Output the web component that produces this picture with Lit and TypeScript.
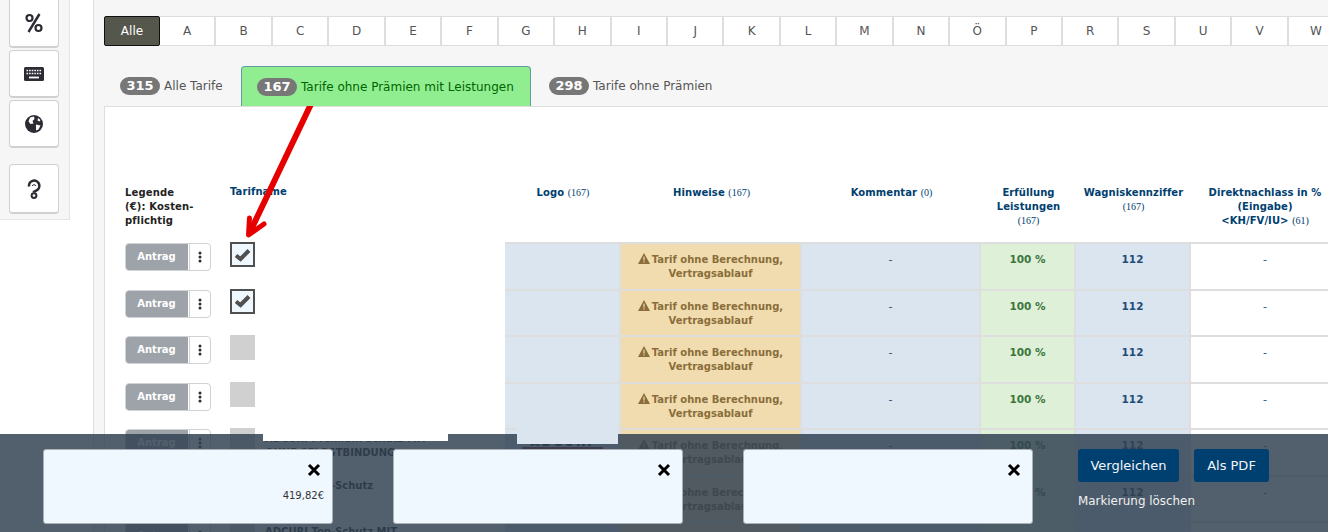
import { LitElement, html, css, svg } from "lit";
import { customElement } from "lit/decorators.js";

const LETTERS = "A B C D E F G H I J K L M N Ö P R S U V W".split(" ");
const NAMES: [string, string][] = [
  ["", ""], ["", ""], ["", ""], ["", ""],
  ["ADCURI Premium Schutz MIT", "OHNE SELBSTBINDUNG"],
  ["ADCURI Top-Schutz", ""],
  ["ADCURI Top-Schutz MIT", "SELBSTBINDUNG"],
];

const closeIcon = svg`<svg class="x" viewBox="0 0 14 14"><path d="M2 2 L12 12 M12 2 L2 12" stroke="#000" stroke-width="3" fill="none"/></svg>`;
const warn = svg`<svg class="warn" viewBox="0 0 12 11"><path d="M6 0 L12 11 H0 Z" fill="#8a6d3b"/><rect x="5.4" y="3.6" width="1.2" height="4" fill="#f0dcae"/><rect x="5.4" y="8.4" width="1.2" height="1.2" fill="#f0dcae"/></svg>`;
const dots = svg`<svg class="dots" viewBox="0 0 4 12"><circle cx="2" cy="2" r="1.5" fill="#2b2b33"/><circle cx="2" cy="6" r="1.5" fill="#2b2b33"/><circle cx="2" cy="10" r="1.5" fill="#2b2b33"/></svg>`;

@customElement("app-root")
export class AppRoot extends LitElement {
  static styles = css`
    :host { display: block; width: 1331px; height: 532px; overflow: hidden; position: relative; background: #fff; font-family: "DejaVu Sans", Verdana, sans-serif; color: #333; }
    .page { display: flex; height: 532px; width: 1328px; overflow: hidden; }
    .side { width: 70px; height: 220px; flex: none; box-sizing: border-box; background: #f6f6f6; border-right: 1px solid #e6e6e6; border-bottom: 1px solid #e6e6e6; padding-left: 9px; display: flex; flex-direction: column; gap: 2px; }
    .sb { width: 50px; height: 48px; box-sizing: border-box; background: #fff; border: 1px solid #d0d0d0; border-bottom-width: 2px; border-radius: 4px; display: flex; align-items: center; justify-content: center; flex: none; }
    .sb.first { border-top: none; border-top-left-radius: 0; border-top-right-radius: 0; }
    .sb.help { margin-top: 14px; height: 50px; }
    .sb svg { width: 22px; height: 22px; }
    .gutter { width: 23px; flex: none; }
    .main { flex: 1; min-width: 0; background: #f6f6f6; border-left: 1px solid #dde0e3; padding: 16px 0 0 10px; box-sizing: border-box; }
    .alpha { display: flex; height: 30px; }
    .alpha div { width: 56.45px; box-sizing: border-box; flex: none; background: #fff; border: 1px solid #dedede; border-left-width: 0; border-right-width: 2px; display: flex; align-items: center; justify-content: center; font-size: 12px; color: #555; }
    .alpha .on { background: #55564c; color: #fff; border: 1px solid #111; border-radius: 2px; width: 56px; }
    .tabs { display: flex; align-items: stretch; height: 40px; margin-top: 20px; position: relative; z-index: 1; }
    .tab { display: flex; align-items: center; gap: 4px; font-size: 12px; color: #555; height: 40px; box-sizing: border-box; }
    .tab.t1 { padding-left: 16px; width: 137px; }
    .tab.t2 { width: 290px; padding-left: 15px; background: #90ee90; color: #006400; border: 1px solid #5f9ea0; border-bottom: none; border-radius: 4px 4px 0 0; }
    .tab.t3 { padding-left: 18px; }
    .badge { background: #777; color: #fff; font-weight: 700; font-size: 13px; line-height: 18px; height: 18px; width: 40px; text-align: center; border-radius: 9px; flex: none; }
    .panel { background: #fff; border-top: 1px solid #dedede; border-left: 1px solid #dedede; height: 430px; box-sizing: border-box; overflow: hidden; }
    .row { display: grid; grid-template-columns: 120px 280px 116px 181px 179px 95px 115px 148px; }
    .head { height: 137px; }
    .h { padding: 79px 4px 0; font-size: 10px; line-height: 14px; font-weight: 700; color: #004070; text-align: center; box-sizing: border-box; border-bottom: 2px solid #dedede; letter-spacing: 0.08px; }
    .h small { font-family: "Liberation Serif", serif; font-size: 10px; font-weight: 400; white-space: nowrap; letter-spacing: 0; }
    .h.leg { text-align: left; color: #222; padding: 79px 0 0 20px; border-bottom: none; letter-spacing: 0.15px; }
    .h.name { text-align: left; padding: 78px 0 0 5px; border-bottom: none; }
    .body { height: 46.5px; box-sizing: border-box; }
    .cell { border-bottom: 2px solid #dedede; border-right: 2px solid #dedede; font-size: 10.5px; line-height: 14px; font-weight: 700; text-align: center; padding-top: 8px; box-sizing: border-box; min-width: 0; }
    .act { border-bottom: none; border-right: none; background: #fff; padding: 0 0 0 20px; display: flex; align-items: flex-start; }
    .namecell { border-bottom: none; border-right: none; background: #fff; padding: 0 0 0 5px; display: flex; text-align: left; }
    .btn { display: flex; width: 86px; height: 28px; border-radius: 4px; border: 1px solid #cfd2d6; box-sizing: border-box; background: #fff; overflow: hidden; margin-top: -1px; flex: none; position: relative; }
    .btn b { width: 63px; background: #9ea3aa; color: #fff; font-size: 10px; text-align: center; flex: none; border-right: 1px solid #fff; margin: -1px 0 -1px -1px; height: 28px; line-height: 28px; border-radius: 4px 0 0 4px; }
    .btn span { flex: 1; display: flex; align-items: center; justify-content: center; border-left: 1px solid #cfd2d6; }
    .dots { width: 4px; height: 12px; }
    .chk { width: 25px; height: 25px; box-sizing: border-box; flex: none; background: #d0d0d0; display: flex; align-items: center; justify-content: center; margin-top: -2px; position: relative; }
    .chk.on { background: #eff7ff; border: 2px solid #505050; }
    .chk svg { width: 17px; height: 14px; }
    .nm { margin-left: 10px; font-size: 10px; color: #222; line-height: 14px; padding-top: 2px; white-space: nowrap; }
    .blue { background: #dbe5ef; color: #1f4e79; }
    .orange { background: #f0dcae; color: #8a6d3b; font-size: 10px; padding-top: 9px; }
    .green { background: #dff0d8; color: #3c763d; }
    .white { background: #fff; color: #1f4e79; border-right: none; }
    .dash { font-weight: 400; font-size: 11px; padding-top: 9px; }
    .warn { width: 12px; height: 11px; vertical-align: -1px; margin-right: 2px; }
    .lg { display: inline-block; width: 81px; height: 9px; line-height: 9px; font-size: 12px; letter-spacing: 2px; color: #223; border-bottom: 2px solid #8a2040; overflow: hidden; }
    .overlay { position: absolute; left: 0; top: 434px; width: 1328px; height: 98px; background: rgba(49, 64, 81, 0.84); display: flex; align-items: flex-start; padding: 15px 0 0 43px; box-sizing: border-box; }
    .card { width: 290px; height: 75px; box-sizing: border-box; background: #eff7ff; border: 1px solid #aab0b6; border-radius: 3px; margin-right: 60px; position: relative; text-align: right; padding: 38px 8px 0 0; font-size: 10px; line-height: 16px; color: #333; }
    .x { position: absolute; right: 11px; top: 13px; width: 14px; height: 14px; }
    .ctl { margin-left: -15px; }
    .ctlbtns { display: flex; gap: 15px; }
    .pb { height: 33px; background: #004070; color: #f2f5f8; font-size: 13px; line-height: 33px; border-radius: 3px; text-align: center; }
    .pb.a { width: 101px; } .pb.b { width: 75px; }
    .clear { color: #f0f0f0; font-size: 11.9px; margin-top: 11px; line-height: 16px; }
    .mask1 { position: absolute; left: 263px; top: 243px; width: 242px; height: 191px; background: #fff; }
    .mask2 { position: absolute; left: 263px; top: 434px; width: 185px; height: 7px; background: #fff; }
    .mask3 { position: absolute; left: 517px; top: 415px; width: 101px; height: 29px; background: #dbe5ef; }
    .arrow { position: absolute; left: 0; top: 0; width: 1331px; height: 532px; pointer-events: none; }
  `;

  private body(i: number) {
    const n = NAMES[i];
    return html`<div class="row body">
      <div class="cell act"><div class="btn"><b>Antrag</b><span>${dots}</span></div></div>
      <div class="cell namecell">
        <div class="chk ${i < 2 ? "on" : ""}">${i < 2 ? svg`<svg viewBox="0 0 17 14"><path d="M2 7.5 L6.5 11 L15 2.5" stroke="#505050" stroke-width="4" fill="none"/></svg>` : ""}</div>
        <div class="nm">${n[0]}<br />${n[1]}</div>
      </div>
      <div class="cell blue">${i === 4 ? html`<span class="lg">ADCURI</span>` : ""}</div>
      <div class="cell orange">${warn}Tarif ohne Berechnung,<br />Vertragsablauf</div>
      <div class="cell blue dash">-</div>
      <div class="cell green">100 %</div>
      <div class="cell blue">112</div>
      <div class="cell white dash">-</div>
    </div>`;
  }

  render() {
    return html`
      <div class="page">
        <div class="side">
          <div class="sb first"><svg viewBox="0 0 22 22"><path d="M5.5 20 L16.5 2" stroke="#2b2b33" stroke-width="2.4"/><circle cx="6.5" cy="6" r="3" fill="none" stroke="#2b2b33" stroke-width="2.2"/><circle cx="15.5" cy="16" r="3" fill="none" stroke="#2b2b33" stroke-width="2.2"/></svg></div>
          <div class="sb"><svg viewBox="0 0 22 22"><rect x="1" y="4" width="20" height="14" rx="1.5" fill="#2b2b33"/><path d="M3.5 7.5h15M3.5 10.5h15" stroke="#fff" stroke-width="1.4" stroke-dasharray="1.6 1"/><path d="M6 14.5h10" stroke="#fff" stroke-width="1.8"/></svg></div>
          <div class="sb"><svg viewBox="0 0 22 22"><circle cx="11" cy="11" r="9" fill="#2b2b33"/><path d="M7 4.5 L11 3.5 L11.5 6 L9.5 8 L10.5 10.5 L7.5 11 L5.5 8.5Z M13 11.5 L17.5 12.5 L15.5 16.5 L13 17.5Z M15 5 L17.5 7 L16.5 8.5 L14.5 7.5Z" fill="#fff"/></svg></div>
          <div class="sb help"><svg viewBox="0 0 22 22"><path d="M6 8.5 A5.2 5.2 0 1 1 13.2 12.6 L11 13.8 V14.6" fill="none" stroke="#2b2b33" stroke-width="2.6"/><path d="M9 8 A2.2 2.2 0 0 1 13 8" fill="none" stroke="#2b2b33" stroke-width="1"/><circle cx="11" cy="17.6" r="2.4" fill="none" stroke="#2b2b33" stroke-width="2"/></svg></div>
        </div>
        <div class="gutter"></div>
        <div class="main">
          <div class="alpha"><div class="on">Alle</div>${LETTERS.map((l) => html`<div>${l}</div>`)}</div>
          <div class="tabs">
            <div class="tab t1"><span class="badge">315</span>Alle Tarife</div>
            <div class="tab t2"><span class="badge">167</span>Tarife ohne Prämien mit Leistungen</div>
            <div class="tab t3"><span class="badge">298</span>Tarife ohne Prämien</div>
          </div>
          <div class="panel">
            <div class="row head">
              <div class="h leg">Legende<br />(€): Kosten-<br />pflichtig</div>
              <div class="h name">Tarifname</div>
              <div class="h">Logo <small>(167)</small></div>
              <div class="h">Hinweise <small>(167)</small></div>
              <div class="h">Kommentar <small>(0)</small></div>
              <div class="h">Erfüllung<br />Leistungen<br /><small>(167)</small></div>
              <div class="h">Wagniskennziffer<br /><small>(167)</small></div>
              <div class="h">Direktnachlass in %<br />(Eingabe)<br />&lt;KH/FV/IU&gt; <small>(61)</small></div>
            </div>
            ${NAMES.map((_, i) => this.body(i))}
          </div>
        </div>
      </div>
      <div class="mask1"></div>
      <div class="overlay">
        <div class="card">${closeIcon}419,82€</div>
        <div class="card">${closeIcon}</div>
        <div class="card">${closeIcon}</div>
        <div class="ctl">
          <div class="ctlbtns"><div class="pb a">Vergleichen</div><div class="pb b">Als PDF</div></div>
          <div class="clear">Markierung löschen</div>
        </div>
      </div>
      <div class="mask2"></div>
      <div class="mask3"></div>
      <svg class="arrow" viewBox="0 0 1331 532">
        <path d="M312 102 L250 232" stroke="#e60000" stroke-width="6" stroke-linecap="round" fill="none"/>
        <path d="M249.5 218 L248.5 235 L264 224" stroke="#e60000" stroke-width="5" stroke-linecap="round" stroke-linejoin="round" fill="none"/>
      </svg>
    `;
  }
}
